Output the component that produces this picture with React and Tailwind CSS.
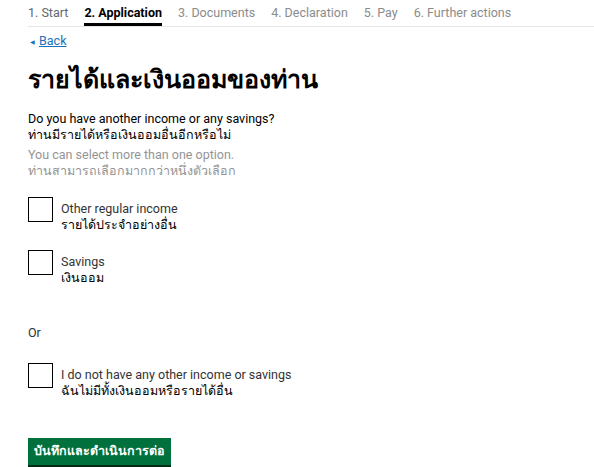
const steps = [
  { label: "1. Start", state: "done" },
  { label: "2. Application", state: "active" },
  { label: "3. Documents", state: "todo" },
  { label: "4. Declaration", state: "todo" },
  { label: "5. Pay", state: "todo" },
  { label: "6. Further actions", state: "todo" },
];

const options = [
  { en: "Other regular income", th: "รายได้ประจำอย่างอื่น" },
  { en: "Savings", th: "เงินออม" },
];

function Checkbox({ en, th }) {
  return (
    <label className="flex items-start gap-[8px] cursor-pointer">
      <span className="w-[25px] h-[25px] border-[1.5px] border-black bg-white shrink-0" />
      <span className="pt-[4px] text-[12.5px] leading-[16px]">
        <span className="block text-[#333]">{en}</span>
        <span className="block text-black">{th}</span>
      </span>
    </label>
  );
}

export default function App() {
  return (
    <div className="min-h-screen bg-white text-black font-['Roboto','Noto_Sans',sans-serif]">
      {/* step nav */}
      <nav className="ml-[28px] border-b border-[#e5e5e5] flex gap-[16px] text-[12.5px] leading-[16px] pt-[5px]">
        {steps.map((s) => (
          <span
            key={s.label}
            className={
              s.state === "active"
                ? "font-bold text-black pb-[2px] border-b-[3px] border-black"
                : s.state === "done"
                ? "text-[#5f676b] pb-[5px]"
                : "text-[#8b8b8b] pb-[5px]"
            }
          >
            {s.label}
          </span>
        ))}
      </nav>

      <main className="px-[28px]">
        <a href="#" className="mt-[5px] flex items-center gap-[4px] text-[12.5px] text-[#1d70b8]">
          <span className="text-[6px] ml-[2px]">◀</span>
          <span className="underline">Back</span>
        </a>

        <h1 className="mt-[12px] text-[25px] leading-[34px] font-bold">รายได้และเงินออมของท่าน</h1>

        <div className="mt-[14px] text-[12.5px] leading-[16px]">
          <p>Do you have another income or any savings?</p>
          <p>ท่านมีรายได้หรือเงินออมอื่นอีกหรือไม่</p>
        </div>
        <div className="mt-[4px] text-[12.5px] leading-[16px] text-[#949494]">
          <p>You can select more than one option.</p>
          <p>ท่านสามารถเลือกมากกว่าหนึ่งตัวเลือก</p>
        </div>

        <div className="mt-[18px] flex flex-col gap-[17px]">
          {options.map((o) => (
            <Checkbox key={o.en} {...o} />
          ))}
        </div>

        <p className="mt-[39px] text-[12.5px] leading-[16px] text-[#333]">Or</p>

        <div className="mt-[22px]">
          <Checkbox en="I do not have any other income or savings" th="ฉันไม่มีทั้งเงินออมหรือรายได้อื่น" />
        </div>

        <button className="mt-[39px] bg-[#00703c] text-white font-bold text-[12.5px] px-[6px] h-[27px] shadow-[0_2px_0_#002d18]">
          บันทึกและดำเนินการต่อ
        </button>
      </main>
    </div>
  );
}
